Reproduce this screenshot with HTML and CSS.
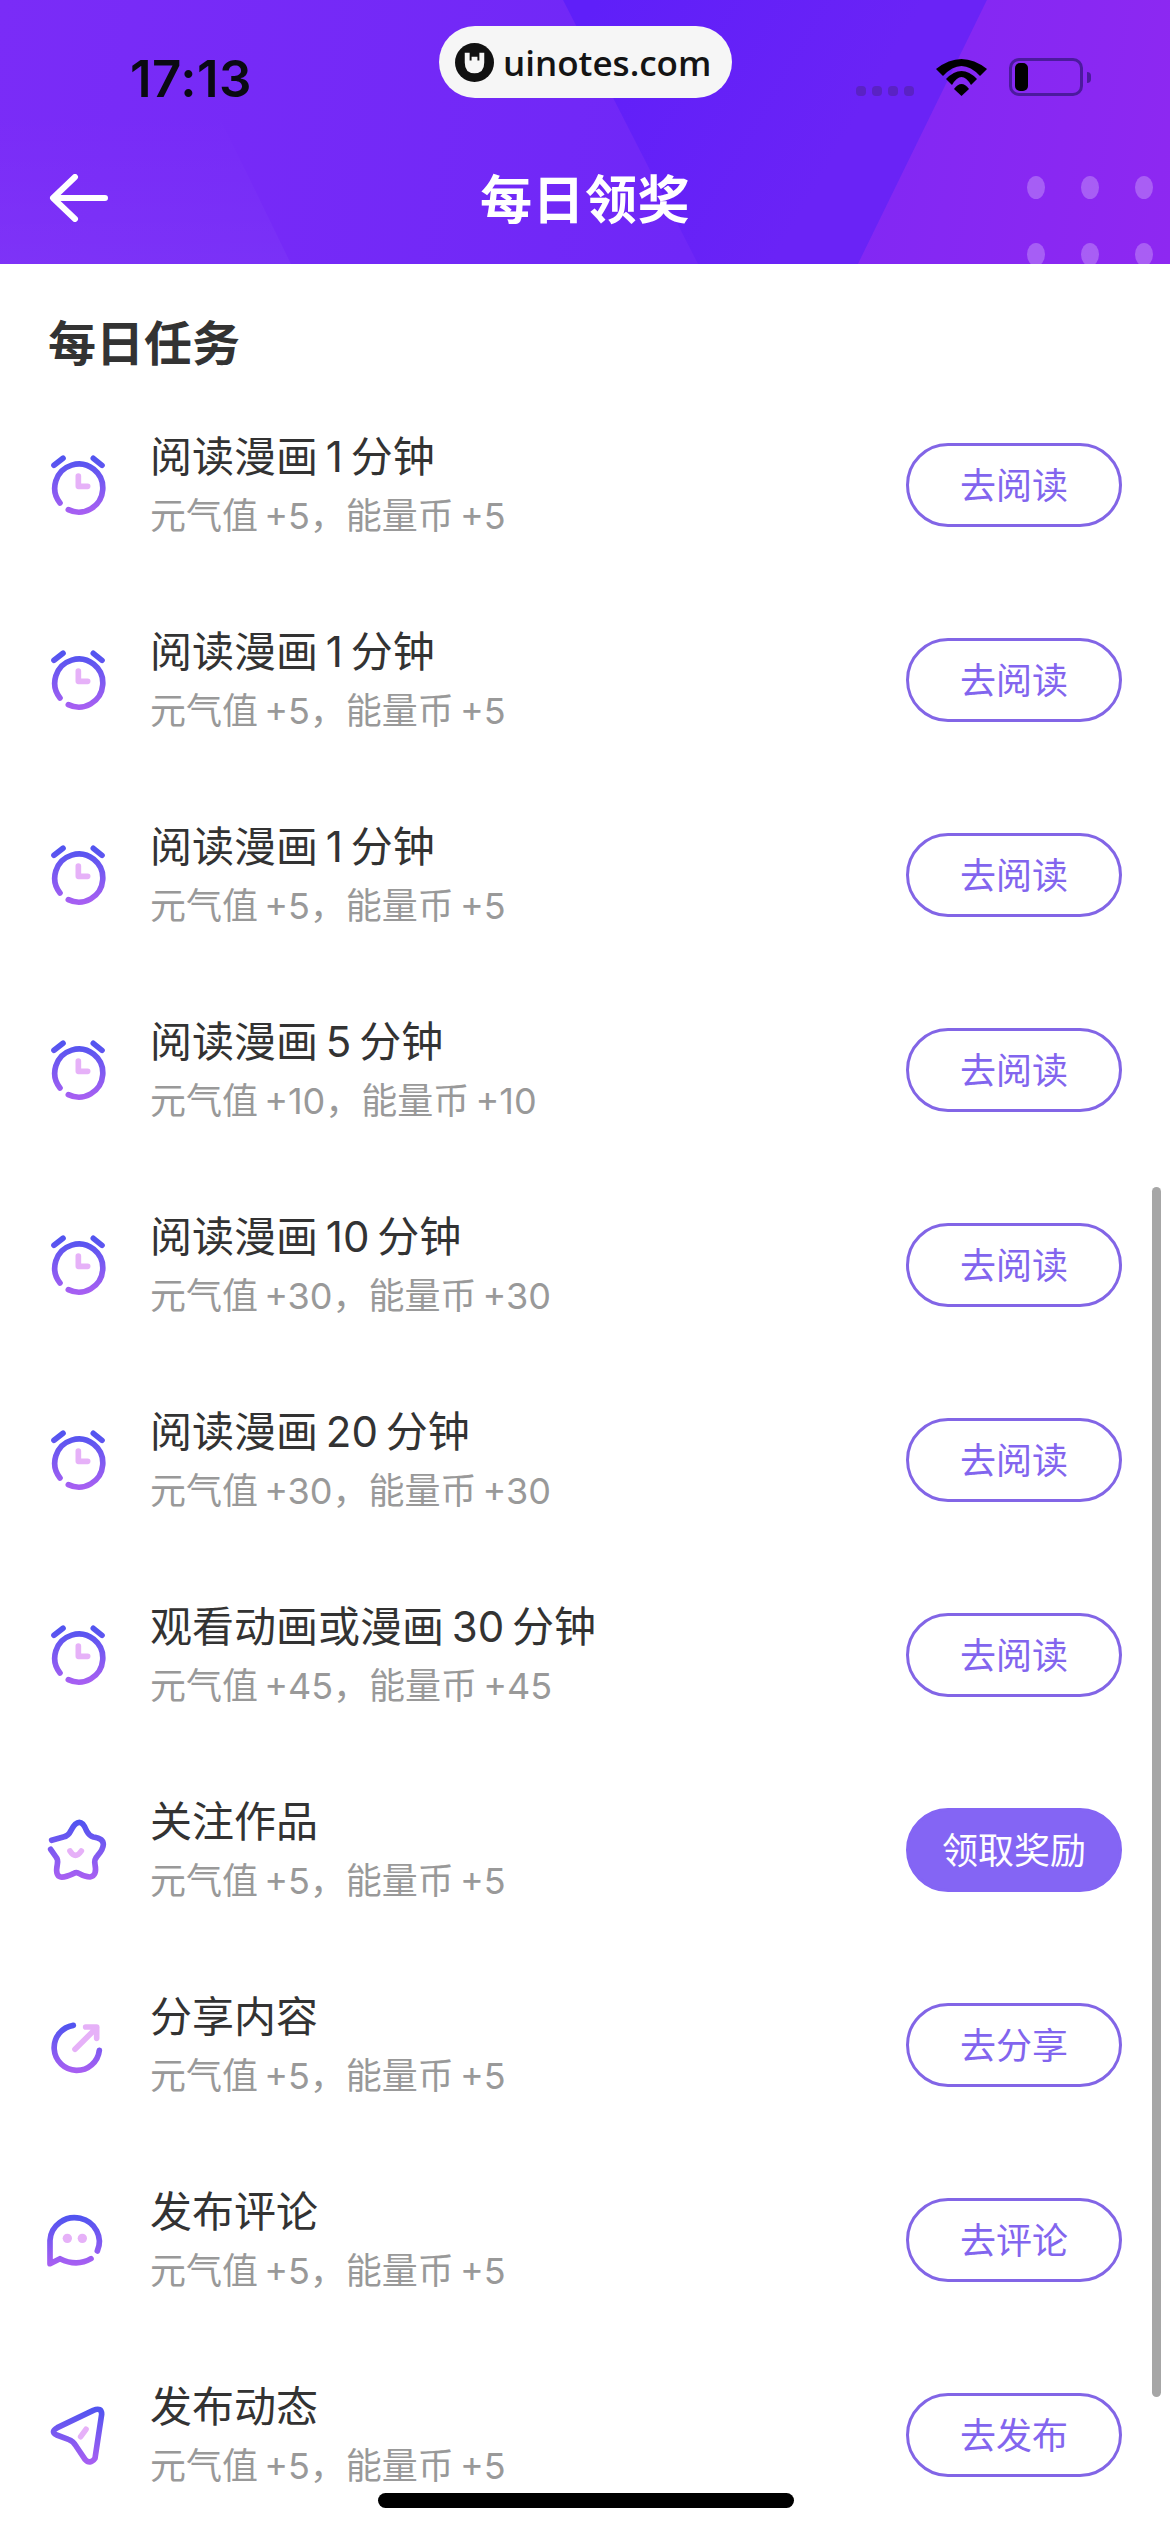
FILE: index.html
```html
<!DOCTYPE html>
<html lang="zh-CN">
<head>
    <meta charset="UTF-8">
    <meta name="viewport" content="width=device-width, initial-scale=1.0">
    <title>每日领奖</title>
    <link rel="stylesheet" href="styles.css">
</head>
<body>
    <svg class="defs" width="0" height="0">
        <defs>
            <linearGradient id="iconGrad" x1="0" y1="0" x2="0" y2="1">
                <stop offset="0" stop-color="#5254f0"/>
                <stop offset="1" stop-color="#a65ff2"/>
            </linearGradient>
            <symbol id="alarm" viewBox="78 69 192 192">
                <path class="main" d="M120 216 A72 72 0 1 1 145 236 M102 103 L129 82 M220 82 L246 103"/>
                <path class="soft" d="M175 135 V166 H203"/>
            </symbol>
            <symbol id="star" viewBox="78 114 192 192">
                <path class="main" d="M95 178 L130 168 Q145 165 152 150 Q165 124 178 124 Q190 124 200 150 Q208 165 220 168 Q250 172 250 190 Q250 205 232 225 Q222 235 225 250 Q232 285 210 288 Q195 288 178 278 Q170 272 160 278 Q135 290 122 288 Q105 285 112 250 Q115 235 108 228 L92 205"/>
                <path class="soft" d="M150 210 Q166 236 184 210"/>
            </symbol>
            <symbol id="share" viewBox="78 99 192 192">
                <path class="main" d="M160 133 A68 68 0 1 0 238 208"/>
                <path class="soft" d="M165 205 L230 140 M197 138 H230 V172"/>
            </symbol>
            <symbol id="comment" viewBox="78 84 192 192">
                <path class="main" d="M232 210 A74 72 0 1 0 90 178 V248 L120 233 Q170 258 213 233"/>
                <circle class="dot" cx="142" cy="172" r="14"/>
                <circle class="dot" cx="187" cy="172" r="14"/>
            </symbol>
            <symbol id="send" viewBox="78 99 192 192">
                <path class="main" d="M220 118 L112 170 Q90 182 110 192 L145 205 Q160 210 168 225 L195 265 Q210 282 225 262 L245 130 Q245 108 220 118 Z"/>
                <path class="soft" d="M182 197 L198 175"/>
            </symbol>
        </defs>
    </svg>

    <div class="screen">
        <header class="header">
            <div class="headerShade"></div>
            <div class="statusBar">
                <span class="time">17:13</span>
                <div class="statusIcons">
                    <span class="signal"><i></i><i></i><i></i><i></i></span>
                    <svg class="wifi" viewBox="0 0 51 37" width="51" height="37">
                        <path d="M0 10 Q25.5 -10 51 10 L44 17 Q25.5 -3 7 17 Z"/>
                        <path d="M10 20 Q25.5 4 41 20 L35 26 Q25.5 10 16 26 Z"/>
                        <path d="M18 30 Q25.5 20 33 30 L25.5 37 Z"/>
                    </svg>
                    <span class="battery"><i></i></span>
                    <span class="batteryCap"></span>
                </div>
            </div>
            <div class="nav">
                <svg class="back" viewBox="0 0 60 48" width="60" height="48">
                    <path d="M26 3 L4 24 L26 45 M6 24 H56"/>
                </svg>
                <h1>每日领奖</h1>
            </div>
            <div class="brandPill">
                <svg class="brandLogo" viewBox="0 0 40 40" width="39" height="39">
                    <circle cx="20" cy="20" r="20" fill="#111"/>
                    <path d="M10 10 H15 V18 H17 V14 H23 V18 H25 V10 H30 V20 Q30 31 20 31 Q10 31 10 20 Z" fill="#f6f6f6"/>
                </svg>
                <span>uinotes.com</span>
            </div>
            <div class="dots"><i></i><i></i><i></i><i></i><i></i><i></i></div>
        </header>

        <main class="content">
            <h2>每日任务</h2>
            <div class="taskList">
                <div class="task">
                    <svg class="taskIcon"><use href="#alarm"/></svg>
                    <div class="taskText"><p class="taskName">阅读漫画 1 分钟</p><p class="taskReward">元气值 +5，能量币 +5</p></div>
                    <button class="taskBtn">去阅读</button>
                </div>
                <div class="task">
                    <svg class="taskIcon"><use href="#alarm"/></svg>
                    <div class="taskText"><p class="taskName">阅读漫画 1 分钟</p><p class="taskReward">元气值 +5，能量币 +5</p></div>
                    <button class="taskBtn">去阅读</button>
                </div>
                <div class="task">
                    <svg class="taskIcon"><use href="#alarm"/></svg>
                    <div class="taskText"><p class="taskName">阅读漫画 1 分钟</p><p class="taskReward">元气值 +5，能量币 +5</p></div>
                    <button class="taskBtn">去阅读</button>
                </div>
                <div class="task">
                    <svg class="taskIcon"><use href="#alarm"/></svg>
                    <div class="taskText"><p class="taskName">阅读漫画 5 分钟</p><p class="taskReward">元气值 +10，能量币 +10</p></div>
                    <button class="taskBtn">去阅读</button>
                </div>
                <div class="task">
                    <svg class="taskIcon"><use href="#alarm"/></svg>
                    <div class="taskText"><p class="taskName">阅读漫画 10 分钟</p><p class="taskReward">元气值 +30，能量币 +30</p></div>
                    <button class="taskBtn">去阅读</button>
                </div>
                <div class="task">
                    <svg class="taskIcon"><use href="#alarm"/></svg>
                    <div class="taskText"><p class="taskName">阅读漫画 20 分钟</p><p class="taskReward">元气值 +30，能量币 +30</p></div>
                    <button class="taskBtn">去阅读</button>
                </div>
                <div class="task">
                    <svg class="taskIcon"><use href="#alarm"/></svg>
                    <div class="taskText"><p class="taskName">观看动画或漫画 30 分钟</p><p class="taskReward">元气值 +45，能量币 +45</p></div>
                    <button class="taskBtn">去阅读</button>
                </div>
                <div class="task">
                    <svg class="taskIcon"><use href="#star"/></svg>
                    <div class="taskText"><p class="taskName">关注作品</p><p class="taskReward">元气值 +5，能量币 +5</p></div>
                    <button class="taskBtn taskBtnFilled">领取奖励</button>
                </div>
                <div class="task">
                    <svg class="taskIcon"><use href="#share"/></svg>
                    <div class="taskText"><p class="taskName">分享内容</p><p class="taskReward">元气值 +5，能量币 +5</p></div>
                    <button class="taskBtn">去分享</button>
                </div>
                <div class="task">
                    <svg class="taskIcon"><use href="#comment"/></svg>
                    <div class="taskText"><p class="taskName">发布评论</p><p class="taskReward">元气值 +5，能量币 +5</p></div>
                    <button class="taskBtn">去评论</button>
                </div>
                <div class="task">
                    <svg class="taskIcon"><use href="#send"/></svg>
                    <div class="taskText"><p class="taskName">发布动态</p><p class="taskReward">元气值 +5，能量币 +5</p></div>
                    <button class="taskBtn">去发布</button>
                </div>
            </div>
        </main>

        <div class="scrollThumb"></div>
        <div class="homeBar"></div>
    </div>
</body>
</html>
```

FILE: styles.css
```css
* {
    box-sizing: border-box;
}

body {
    margin: 0;
    font-family: "Inter", "Noto Sans CJK SC", sans-serif;
    background-color: #fff;
}

.defs {
    position: absolute;
}

.main,
.soft {
    fill: none;
    stroke-width: 17;
    stroke-linecap: round;
    stroke-linejoin: round;
}

.main {
    stroke: url(#iconGrad);
}

.soft {
    stroke: #e6b1f8;
}

.dot {
    fill: #e6b1f8;
}

.screen {
    position: relative;
    width: 1170px;
    height: 2532px;
    overflow: hidden;
    background-color: #fff;
}

/* header */
.header {
    position: relative;
    height: 264px;
    overflow: hidden;
    background: linear-gradient(100deg, #7a2cf7 0%, #6f27f7 60%);
}

.header::before {
    content: "";
    position: absolute;
    inset: 0;
    background: linear-gradient(120deg, #5f1ff9 45%, #6a23f6 70%);
    clip-path: polygon(563px 0, 987px 0, 858px 264px, 698px 264px);
}

.header::after {
    content: "";
    position: absolute;
    inset: 0;
    background: linear-gradient(100deg, #8028f4 70%, #8e28f1 100%);
    clip-path: polygon(987px 0, 1170px 0, 1170px 264px, 858px 264px);
}

.headerShade {
    position: absolute;
    inset: 0;
    background: linear-gradient(to bottom, rgba(255, 255, 255, 0) 110px, rgba(255, 255, 255, 0.035) 264px);
    clip-path: polygon(0 110px, 216px 110px, 291px 264px, 0 264px);
}

.statusBar {
    position: relative;
    z-index: 1;
    display: flex;
    justify-content: space-between;
    align-items: center;
    height: 156px;
    padding: 0 79px 0 130px;
}

.time {
    font-size: 51px;
    font-weight: 600;
    letter-spacing: 0.5px;
    color: #0a0a12;
}

.statusIcons {
    display: flex;
    align-items: center;
    height: 38px;
    margin-top: -2px;
}

.signal {
    display: flex;
    align-self: flex-end;
    gap: 6px;
    margin-right: 22px;
}

.signal i {
    width: 10px;
    height: 10px;
    border-radius: 4px;
    background-color: #5a22c4;
}

.wifi {
    fill: #000;
    margin-right: 22px;
}

.battery {
    display: block;
    width: 74px;
    height: 38px;
    padding: 2px 3px;
    border: 3px solid #4c1a9e;
    border-radius: 10px;
}

.battery i {
    display: block;
    width: 13px;
    height: 28px;
    border-radius: 5px;
    background-color: #000;
}

.batteryCap {
    width: 4px;
    height: 11px;
    margin-left: 4px;
    border-radius: 0 4px 4px 0;
    background-color: #4c1a9e;
}

.nav {
    position: relative;
    z-index: 1;
    display: flex;
    justify-content: center;
    align-items: center;
    height: 84px;
    margin-top: -2px;
}

.back {
    position: absolute;
    left: 49px;
    top: 20px;
    fill: none;
    stroke: #fff;
    stroke-width: 6;
    stroke-linecap: round;
    stroke-linejoin: round;
}

.nav h1 {
    margin: 0;
    font-size: 52px;
    font-weight: 700;
    letter-spacing: 0.5px;
    color: #fff;
}

.brandPill {
    position: absolute;
    z-index: 1;
    left: 439px;
    top: 26px;
    display: flex;
    align-items: center;
    gap: 9px;
    width: 293px;
    height: 72px;
    padding-left: 16px;
    border-radius: 36px;
    background-color: #f6f6f6;
}

.brandPill span {
    font-family: "Open Sans", sans-serif;
    font-size: 35px;
    font-weight: 600;
    color: #141414;
}

.dots {
    position: absolute;
    z-index: 1;
    left: 1027px;
    top: 176px;
    display: grid;
    grid-template-columns: repeat(3, 18px);
    column-gap: 36px;
    row-gap: 44px;
}

.dots i {
    height: 23px;
    border-radius: 50%;
    background-color: rgba(255, 255, 255, 0.25);
}

/* task list */
.content h2 {
    height: 124px;
    margin: 0;
    padding: 45px 0 0 48px;
    font-size: 48px;
    line-height: 70px;
    font-weight: 700;
    color: #333;
}

.task {
    display: flex;
    align-items: center;
    height: 195px;
    padding: 0 48px 0 46px;
}

.taskIcon {
    flex: none;
    width: 64px;
    height: 64px;
    margin-right: 40px;
}

.taskText {
    flex: 1;
}

.taskText p {
    margin: 0;
    white-space: nowrap;
    word-spacing: -4px;
}

.taskName {
    font-size: 42px;
    line-height: 60px;
    color: #333;
}

.taskReward {
    font-size: 36px;
    line-height: 58px;
    color: #999;
}

.taskBtn {
    flex: none;
    width: 216px;
    height: 84px;
    margin-bottom: 1px;
    padding: 0 0 4px;
    font: inherit;
    font-size: 36px;
    color: #8265ee;
    background-color: #fff;
    border: 3px solid #8265e6;
    border-radius: 42px;
}

.taskBtnFilled {
    color: #fff;
    background-color: #8465f4;
    border-color: #8465f4;
}

.scrollThumb {
    position: absolute;
    left: 1152px;
    top: 1187px;
    width: 9px;
    height: 1210px;
    border-radius: 5px;
    background-color: #a6a6a6;
}

.homeBar {
    position: absolute;
    left: 378px;
    top: 2493px;
    width: 416px;
    height: 15px;
    border-radius: 8px;
    background-color: #000;
}
```
